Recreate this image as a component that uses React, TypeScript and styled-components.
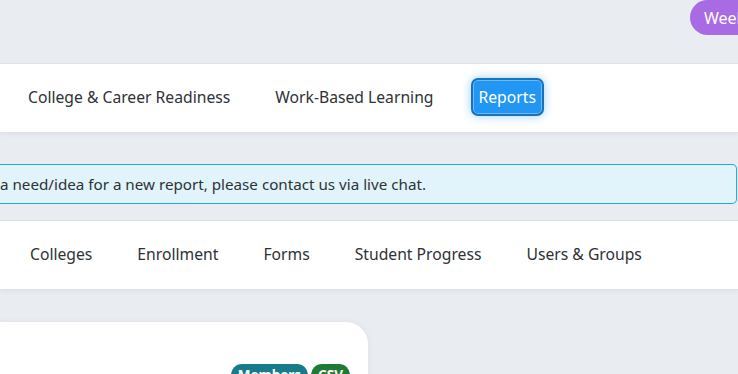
import React from "react";
import styled, { createGlobalStyle } from "styled-components";

const GlobalStyle = createGlobalStyle`
  html, body {
    margin: 0;
    padding: 0;
    background: #e9ecf0;
    overflow: hidden;
    font-family: "Noto Sans", "Open Sans", sans-serif;
    color: #2b2f33;
  }
`;

const Page = styled.div`
  width: 738px;
  height: 374px;
  overflow: hidden;
`;

const TopBar = styled.div`
  height: 63px;
  display: flex;
  align-items: flex-start;
`;

const Pill = styled.div`
  margin-left: auto;
  margin-right: -112px;
  width: 160px;
  height: 35px;
  border-radius: 0 0 18px 18px;
  border-top-left-radius: 18px;
  background: #a96be3;
  color: #fff;
  font-size: 16px;
  display: flex;
  align-items: center;
  padding-left: 14px;
  box-sizing: border-box;
  white-space: nowrap;
`;

const NavBar = styled.nav<{ $indent: number }>`
  height: 70px;
  background: #fff;
  border-top: 1px solid #dde2e8;
  border-bottom: 1px solid #dde2e8;
  box-sizing: border-box;
  box-shadow: 0 2px 4px rgba(0, 0, 0, 0.04);
  display: flex;
  align-items: center;
  gap: 45px;
  padding-left: ${(p) => p.$indent}px;
  padding-bottom: 2px;
  white-space: nowrap;
`;

const NavItem = styled.span`
  font-size: 15.7px;
  color: #2e3236;
`;

const ActiveItem = styled.span`
  font-size: 15.7px;
  color: #fff;
  background: #2196f3;
  border: 2px solid #1873bb;
  border-radius: 7px;
  padding: 6px 6px;
  margin-left: -8px;
  box-shadow: 0 0 10px rgba(33, 150, 243, 0.45),
    inset 0 0 0 1px rgba(255, 255, 255, 0.35);
`;

const Alert = styled.div`
  margin: 31px 1px 16px 0;
  height: 40px;
  box-sizing: border-box;
  background: #e1f4fc;
  border: 1px solid #1ea5f3;
  border-left: none;
  border-radius: 0 5px 5px 0;
  display: flex;
  align-items: center;
  padding-bottom: 1px;
  font-size: 15.2px;
  color: #2e3236;
  white-space: nowrap;
`;

const CardRow = styled.div`
  margin-top: 32px;
`;

const Card = styled.div`
  width: 368px;
  height: 80px;
  background: #fff;
  border-radius: 0 22px 0 0;
  box-shadow: 0 0 6px rgba(0, 0, 0, 0.06);
  box-sizing: border-box;
  padding: 42px 18px 0 0;
  display: flex;
  align-items: flex-start;
`;

const CardNote = styled.span`
  font-size: 13px;
  color: #6b7178;
  margin-top: 9px;
  margin-left: -3px;
  letter-spacing: 3px;
`;

const Badges = styled.div`
  margin-left: auto;
  display: flex;
  gap: 3px;
`;

const Badge = styled.span<{ $bg: string }>`
  background: ${(p) => p.$bg};
  color: #fff;
  font-size: 13.5px;
  font-weight: 700;
  border-radius: 11px;
  padding: 1px 7px;
  line-height: 20px;
`;

const topNav = ["College & Career Readiness", "Work-Based Learning"];
const subNav = ["Colleges", "Enrollment", "Forms", "Student Progress", "Users & Groups"];

export default function App() {
  return (
    <Page>
      <GlobalStyle />
      <TopBar>
        <Pill>Weekly Summary</Pill>
      </TopBar>
      <NavBar $indent={28}>
        {topNav.map((t) => (
          <NavItem key={t}>{t}</NavItem>
        ))}
        <ActiveItem>Reports</ActiveItem>
      </NavBar>
      <Alert>a need/idea for a new report, please contact us via live chat.</Alert>
      <NavBar $indent={30}>
        {subNav.map((t) => (
          <NavItem key={t}>{t}</NavItem>
        ))}
      </NavBar>
      <CardRow>
        <Card>
          <CardNote>lbl</CardNote>
          <Badges>
            <Badge $bg="#187b8a">Members</Badge>
            <Badge $bg="#1f7a33">CSV</Badge>
          </Badges>
        </Card>
      </CardRow>
    </Page>
  );
}
